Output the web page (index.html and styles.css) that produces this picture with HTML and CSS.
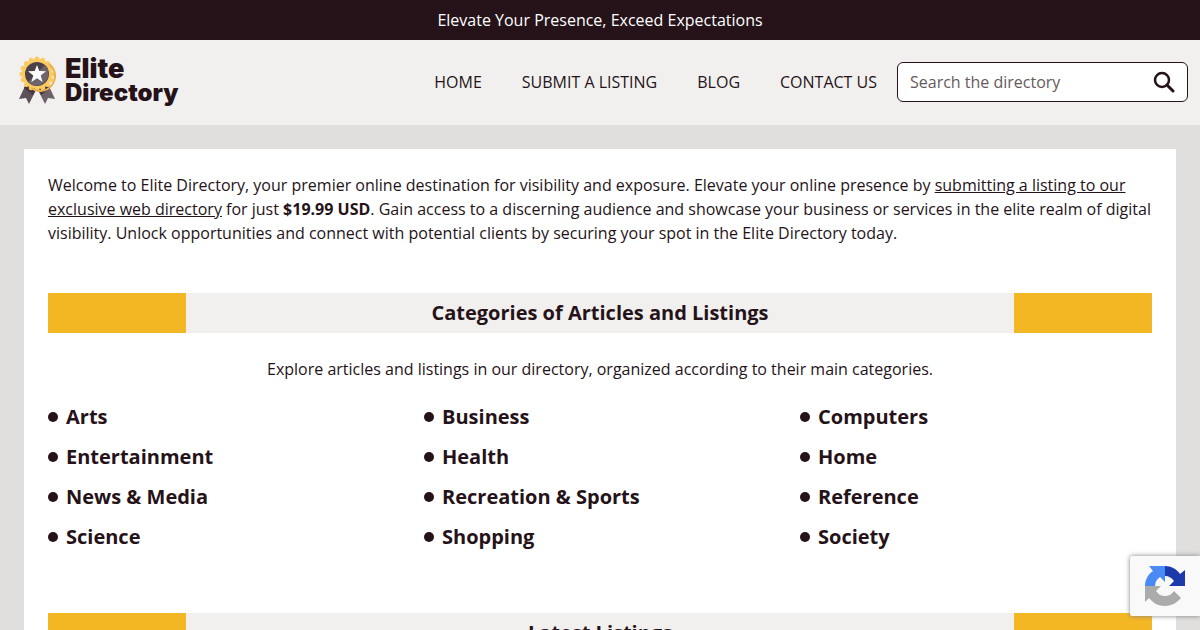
FILE: index.html
```html
<!DOCTYPE html>
<html lang="en">

<head>
  <meta charset="utf-8">
  <meta name="viewport" content="width=device-width, initial-scale=1">
  <title>Elite Directory</title>
  <link rel="stylesheet" href="styles.css">
</head>

<body>
  <div class="topbar">Elevate Your Presence, Exceed Expectations</div>

  <header class="header">
    <a class="logo" href="/">
      <svg width="38" height="50" viewBox="0 0 38 50" aria-hidden="true">
        <path fill="#5c5158" d="M8 28 1 43l7-1 3 6 9-18z" />
        <path fill="#6d6269" d="M30 28l7 15-7-1-3 6-9-18z" />
        <path fill="#433740" d="M8 28l-2 4 9 7 4-8 4 8 9-7-2-4z" />
        <circle cx="19" cy="18" r="15" fill="#fbcb62" />
        <circle cx="19" cy="18" r="15" fill="none" stroke="#fbcb62" stroke-width="5" stroke-linecap="round" pathLength="96" stroke-dasharray="0 6" />
        <path fill="none" stroke="#e9b14d" stroke-width="2" d="M31 8a15 15 0 0 1-18 24" />
        <circle cx="19" cy="18" r="12" fill="#4b4149" />
        <path fill="#6d646c" d="M10 26a12 12 0 0 0 17-17z" />
        <path fill="#fff" d="M19 9l2.300 6 6.700.3-5.300 4.200 1.900 6.500-5.600-3.800-5.600 3.800 1.900-6.500L10 15.300l6.700-.3z" />
      </svg>
      <span class="logo-text"><span class="logo-big">Elite</span><span>Directory</span></span>
    </a>
    <nav class="nav">
      <a href="/">Home</a>
      <a href="/submit">Submit a Listing</a>
      <a href="/blog">Blog</a>
      <a href="/contact">Contact Us</a>
    </nav>
    <form class="search" action="/search">
      <input type="search" name="q" placeholder="Search the directory" aria-label="Search the directory">
      <button type="submit" aria-label="Search">
        <svg width="22" height="22" viewBox="0 0 22 22" fill="none" stroke="currentColor">
          <circle cx="9" cy="9" r="7" stroke-width="2.5" />
          <path d="M14 14l6 6" stroke-width="3" stroke-linecap="round" />
        </svg>
      </button>
    </form>
  </header>

  <main class="content">
    <p class="intro">
      Welcome to Elite Directory, your premier online destination for visibility and exposure. Elevate your online
      presence by <a href="/submit">submitting a listing to our exclusive web directory</a> for just
      <b>$19.99 USD</b>. Gain access to a discerning audience and showcase your business or services in the elite
      realm of digital visibility. Unlock opportunities and connect with potential clients by securing your spot in
      the Elite Directory today.
    </p>

    <section>
      <h2>Categories of Articles and Listings</h2>
      <p class="lead">Explore articles and listings in our directory, organized according to their main categories.</p>
      <ul class="categories">
        <li><a href="/arts">Arts</a></li>
        <li><a href="/business">Business</a></li>
        <li><a href="/computers">Computers</a></li>
        <li><a href="/entertainment">Entertainment</a></li>
        <li><a href="/health">Health</a></li>
        <li><a href="/home">Home</a></li>
        <li><a href="/news-media">News &amp; Media</a></li>
        <li><a href="/recreation-sports">Recreation &amp; Sports</a></li>
        <li><a href="/reference">Reference</a></li>
        <li><a href="/science">Science</a></li>
        <li><a href="/shopping">Shopping</a></li>
        <li><a href="/society">Society</a></li>
      </ul>
    </section>

    <section>
      <h2>Latest Listings</h2>
    </section>
  </main>

  <div class="captcha">
    <svg width="42" height="42" viewBox="0 0 42 42" aria-hidden="true">
      <path fill="#1c3aa9" d="M21 1c6 0 12 3 15 8l5-4v16H25l5-5c-2-3-5-5-9-5z" />
      <path fill="#4a8af4" d="M21 1H5l4 5C4 9 1 15 1 21h10c0-4 2-7 5-9l5 5z" />
      <path fill="#ababab" d="M1 21v16l4-4c4 5 9 8 16 8 6 0 12-3 16-8l-7-7c-2 3-5 5-9 5-4 0-7-2-9-5l5-5z" />
    </svg>
  </div>
</body>

</html>
```
FILE: styles.css
```css
* {
  box-sizing: border-box;
}

body {
  margin: 0;
  background: #e0dfdd;
  color: #251319;
  font-family: "Open Sans", sans-serif;
  font-size: 16px;
  line-height: 24px;
}

a {
  color: inherit;
}

.topbar {
  padding: 8px;
  background: #251319;
  color: #fff;
  text-align: center;
}

.header {
  display: flex;
  align-items: center;
  padding: 16px 12px 17px 18px;
  background: #f1f0ee;
}

.logo {
  display: flex;
  align-items: center;
  gap: 9px;
  margin-right: auto;
  padding-bottom: 2px;
  text-decoration: none;
}

.logo-text {
  display: flex;
  flex-direction: column;
  font-family: Inter, sans-serif;
  font-size: 24px;
  font-weight: 900;
}

.logo-big {
  font-size: 27px;
}

.nav {
  display: flex;
}

.nav a {
  padding: 8px 20px;
  text-decoration: none;
  text-transform: uppercase;
}

.search {
  display: flex;
  align-items: center;
  width: 291px;
  height: 40px;
  padding: 0 12px;
  border: 1px solid #251319;
  border-radius: 6px;
  background: #fff;
}

.search input {
  flex: 1;
  min-width: 0;
  padding: 0;
  border: 0;
  background: none;
  color: inherit;
  font: inherit;
}

.search input::placeholder {
  color: #665a5e;
}

.search button {
  display: flex;
  padding: 0;
  border: 0;
  background: none;
  color: inherit;
}

.content {
  margin: 24px;
  padding: 24px;
  background: #fff;
}

.intro {
  margin: 0 0 48px;
}

h2 {
  margin: 0 0 24px;
  padding: 8px;
  background: linear-gradient(to right, #f4b724 12.5%, #f1f0ee 12.5%, #f1f0ee 87.5%, #f4b724 87.5%);
  font-size: 20px;
  text-align: center;
}

.lead {
  margin: 0 0 24px;
  text-align: center;
}

.categories {
  display: grid;
  grid-template-columns: repeat(3, 1fr);
  gap: 16px 24px;
  margin: 0 0 64px;
  padding: 0;
  list-style: none;
  font-size: 20px;
  font-weight: bold;
}

.categories li {
  display: flex;
  align-items: center;
  gap: 8px;
}

.categories li::before {
  content: "";
  width: 10px;
  height: 10px;
  border-radius: 50%;
  background: #251319;
}

.categories a {
  text-decoration: none;
}

.captcha {
  position: fixed;
  right: 0;
  bottom: 14px;
  width: 70px;
  height: 60px;
  padding: 9px 14px;
  border-radius: 2px 0 0 2px;
  background: #f9f9f9;
  box-shadow: 0 0 5px gray;
}
```
